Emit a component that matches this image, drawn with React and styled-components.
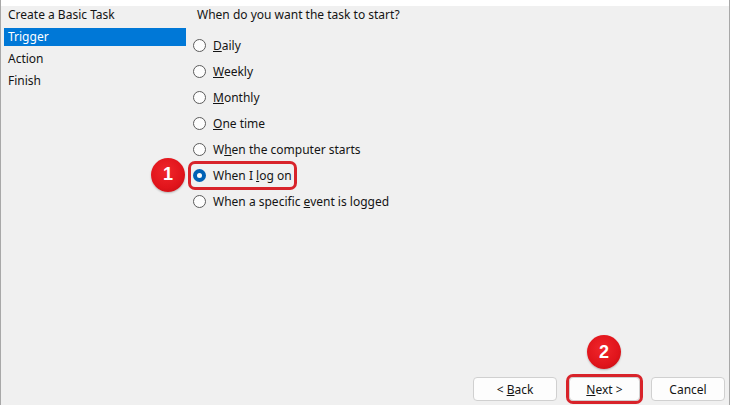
import React from "react";
import styled, { createGlobalStyle } from "styled-components";

const GlobalStyle = createGlobalStyle`
  html, body {
    margin: 0;
    padding: 0;
    background: #f0f0f0;
  }
  body {
    font-family: "Noto Sans", "Open Sans", sans-serif;
    font-size: 12px;
    color: #141414;
  }
`;

const Window = styled.div`
  width: 730px;
  height: 405px;
  box-sizing: border-box;
  display: flex;
  flex-direction: column;
  background: #f0f0f0;
  border-left: 1px solid #a8a8a8;
  border-right: 1px solid #a8a8a8;
  overflow: hidden;
`;

const TopStrip = styled.div`
  height: 6px;
  background: #ffffff;
  flex-shrink: 0;
`;

const Main = styled.div`
  flex: 1;
  display: flex;
`;

const Sidebar = styled.ul`
  list-style: none;
  margin: 0;
  padding: 0 0 0 3px;
  width: 182px;
  display: flex;
  flex-direction: column;
  gap: 4px;
`;

const Step = styled.li`
  height: 18px;
  line-height: 18px;
  padding-left: 4px;
  background: ${(p) => (p.$active ? "#0078d7" : "transparent")};
  color: ${(p) => (p.$active ? "#ffffff" : "#141414")};
`;

const Content = styled.div`
  flex: 1;
  padding-left: 7px;
`;

const Question = styled.div`
  height: 18px;
  line-height: 18px;
  padding-left: 4px;
  margin-bottom: 8px;
`;

const Options = styled.div`
  display: flex;
  flex-direction: column;
`;

const Option = styled.div`
  height: 26px;
  display: flex;
  align-items: center;
`;

const Choice = styled.label`
  position: relative;
  display: inline-flex;
  align-items: center;
  gap: 7px;
  height: 19px;
  border-radius: 2px;
  outline: ${(p) => (p.$marked ? "3px solid #d8232a" : "none")};
  outline-offset: 2px;
`;

const Radio = styled.span`
  width: 13px;
  height: 13px;
  box-sizing: border-box;
  border-radius: 50%;
  background: #fdfdfd;
  border: ${(p) => (p.$checked ? "4px solid #0061b5" : "1px solid #5c5c5c")};
  flex-shrink: 0;
`;

const Badge = styled.span`
  position: absolute;
  left: ${(p) => p.$left}px;
  top: ${(p) => p.$top}px;
  width: 34px;
  height: 34px;
  border-radius: 50%;
  background: radial-gradient(circle at 45% 40%, #f0262b 0%, #e0141b 60%, #b80d12 100%);
  color: #ffffff;
  font-family: "Liberation Sans", Arial, sans-serif;
  font-weight: bold;
  font-size: 18px;
  display: flex;
  align-items: center;
  justify-content: center;
  box-shadow: 0 1px 2px rgba(0, 0, 0, 0.25);
`;

const Footer = styled.div`
  display: flex;
  justify-content: flex-end;
  align-items: center;
  gap: 11px;
  padding: 0 4px 4px 0;
`;

const Button = styled.button`
  position: relative;
  width: ${(p) => p.$width}px;
  height: 24px;
  box-sizing: border-box;
  background: #fdfdfd;
  border: 1px solid #d0d0d0;
  border-radius: 4px;
  font-family: inherit;
  font-size: 12px;
  color: #141414;
  padding: 0;
  margin-left: ${(p) => p.$gap || 0}px;
  outline: ${(p) => (p.$marked ? "3px solid #d8232a" : "none")};
  outline-offset: 0;
`;

const options = [
  { label: <><u>D</u>aily</> },
  { label: <><u>W</u>eekly</> },
  { label: <><u>M</u>onthly</> },
  { label: <><u>O</u>ne time</> },
  { label: <>W<u>h</u>en the computer starts</> },
  { label: <>When I <u>l</u>og on</>, checked: true },
  { label: <>When a specific <u>e</u>vent is logged</> },
];

export default function App() {
  return (
    <>
      <GlobalStyle />
      <Window>
        <TopStrip />
        <Main>
          <Sidebar>
            <Step>Create a Basic Task</Step>
            <Step $active>Trigger</Step>
            <Step>Action</Step>
            <Step>Finish</Step>
          </Sidebar>
          <Content>
            <Question>When do you want the task to start?</Question>
            <Options>
              {options.map((o, i) => (
                <Option key={i}>
                  <Choice $marked={o.checked}>
                    <Radio $checked={o.checked} />
                    <span>{o.label}</span>
                    {o.checked && (
                      <Badge $left={-42} $top={-8}>
                        1
                      </Badge>
                    )}
                  </Choice>
                </Option>
              ))}
            </Options>
          </Content>
        </Main>
        <Footer>
          <Button $width={84}>
            &lt; <u>B</u>ack
          </Button>
          <Button $width={71} $gap={1} $marked>
            <u>N</u>ext &gt;
            <Badge $left={17} $top={-43}>
              2
            </Badge>
          </Button>
          <Button $width={74}>Cancel</Button>
        </Footer>
      </Window>
    </>
  );
}
